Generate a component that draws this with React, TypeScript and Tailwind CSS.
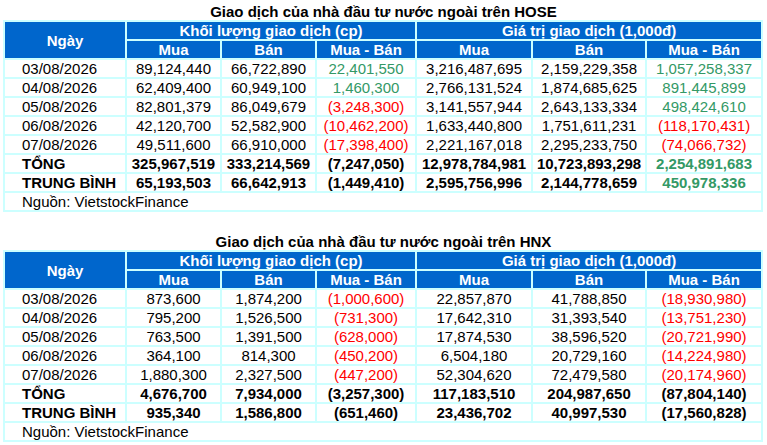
import { JSX } from 'react';

type Cell = { v: string; c?: 'g' | 'r' };
type Row = { d: string; cells: Cell[]; bold?: boolean };

const hose: Row[] = [
  { d: '03/08/2026', cells: [{ v: '89,124,440' }, { v: '66,722,890' }, { v: '22,401,550', c: 'g' }, { v: '3,216,487,695' }, { v: '2,159,229,358' }, { v: '1,057,258,337', c: 'g' }] },
  { d: '04/08/2026', cells: [{ v: '62,409,400' }, { v: '60,949,100' }, { v: '1,460,300', c: 'g' }, { v: '2,766,131,524' }, { v: '1,874,685,625' }, { v: '891,445,899', c: 'g' }] },
  { d: '05/08/2026', cells: [{ v: '82,801,379' }, { v: '86,049,679' }, { v: '(3,248,300)', c: 'r' }, { v: '3,141,557,944' }, { v: '2,643,133,334' }, { v: '498,424,610', c: 'g' }] },
  { d: '06/08/2026', cells: [{ v: '42,120,700' }, { v: '52,582,900' }, { v: '(10,462,200)', c: 'r' }, { v: '1,633,440,800' }, { v: '1,751,611,231' }, { v: '(118,170,431)', c: 'r' }] },
  { d: '07/08/2026', cells: [{ v: '49,511,600' }, { v: '66,910,000' }, { v: '(17,398,400)', c: 'r' }, { v: '2,221,167,018' }, { v: '2,295,233,750' }, { v: '(74,066,732)', c: 'r' }] },
  { d: 'TỔNG', bold: true, cells: [{ v: '325,967,519' }, { v: '333,214,569' }, { v: '(7,247,050)' }, { v: '12,978,784,981' }, { v: '10,723,893,298' }, { v: '2,254,891,683', c: 'g' }] },
  { d: 'TRUNG BÌNH', bold: true, cells: [{ v: '65,193,503' }, { v: '66,642,913' }, { v: '(1,449,410)' }, { v: '2,595,756,996' }, { v: '2,144,778,659' }, { v: '450,978,336', c: 'g' }] },
];

const hnx: Row[] = [
  { d: '03/08/2026', cells: [{ v: '873,600' }, { v: '1,874,200' }, { v: '(1,000,600)', c: 'r' }, { v: '22,857,870' }, { v: '41,788,850' }, { v: '(18,930,980)', c: 'r' }] },
  { d: '04/08/2026', cells: [{ v: '795,200' }, { v: '1,526,500' }, { v: '(731,300)', c: 'r' }, { v: '17,642,310' }, { v: '31,393,540' }, { v: '(13,751,230)', c: 'r' }] },
  { d: '05/08/2026', cells: [{ v: '763,500' }, { v: '1,391,500' }, { v: '(628,000)', c: 'r' }, { v: '17,874,530' }, { v: '38,596,520' }, { v: '(20,721,990)', c: 'r' }] },
  { d: '06/08/2026', cells: [{ v: '364,100' }, { v: '814,300' }, { v: '(450,200)', c: 'r' }, { v: '6,504,180' }, { v: '20,729,160' }, { v: '(14,224,980)', c: 'r' }] },
  { d: '07/08/2026', cells: [{ v: '1,880,300' }, { v: '2,327,500' }, { v: '(447,200)', c: 'r' }, { v: '52,304,620' }, { v: '72,479,580' }, { v: '(20,174,960)', c: 'r' }] },
  { d: 'TỔNG', bold: true, cells: [{ v: '4,676,700' }, { v: '7,934,000' }, { v: '(3,257,300)' }, { v: '117,183,510' }, { v: '204,987,650' }, { v: '(87,804,140)' }] },
  { d: 'TRUNG BÌNH', bold: true, cells: [{ v: '935,340' }, { v: '1,586,800' }, { v: '(651,460)' }, { v: '23,436,702' }, { v: '40,997,530' }, { v: '(17,560,828)' }] },
];

function ForeignTable({ title, rows }: { title: string; rows: Row[] }): JSX.Element {
  const head = 'bg-[#0066cc] text-white font-bold text-center h-[17px] p-0 leading-[17px]';
  return (
    <div>
      {/* tiêu đề bảng */}
      <div className="h-[20px] text-center text-[15px] font-bold leading-[24px] text-black whitespace-nowrap">{title}</div>
      <table className="ml-[3px] w-[760px] table-fixed border-separate border-spacing-[2px] bg-[#ccffff] text-[15px] leading-[17px]">
        <colgroup>
          <col className="w-[120px]" />
          <col className="w-[93px]" />
          <col className="w-[93px]" />
          <col className="w-[98px]" />
          <col className="w-[114px]" />
          <col className="w-[112px]" />
          <col className="w-[114px]" />
        </colgroup>
        <thead>
          <tr>
            <th rowSpan={2} className={head}>Ngày</th>
            <th colSpan={3} className={head}>Khối lượng giao dịch (cp)</th>
            <th colSpan={3} className={head}>Giá trị giao dịch (1,000đ)</th>
          </tr>
          <tr>
            <th className={head}>Mua</th>
            <th className={head}>Bán</th>
            <th className={head}>Mua - Bán</th>
            <th className={head}>Mua</th>
            <th className={head}>Bán</th>
            <th className={head}>Mua - Bán</th>
          </tr>
        </thead>
        <tbody>
          {rows.map((r) => (
            <tr key={r.d} className={r.bold ? 'font-bold' : ''}>
              <td className="h-[17px] bg-white p-0 pl-[17px] text-left text-black whitespace-nowrap">{r.d}</td>
              {r.cells.map((c, i) => (
                <td
                  key={i}
                  className={
                    'h-[17px] bg-white p-0 text-center whitespace-nowrap ' +
                    (c.c === 'g' ? 'text-[#339966]' : c.c === 'r' ? 'text-[#ff0000]' : 'text-black')
                  }
                >
                  {c.v}
                </td>
              ))}
            </tr>
          ))}
          <tr>
            <td colSpan={7} className="h-[17px] bg-white p-0 pl-[17px] text-left text-black">
              Nguồn: VietstockFinance
            </td>
          </tr>
        </tbody>
      </table>
    </div>
  );
}

export default function App(): JSX.Element {
  return (
    <div className="w-[767px] h-[445px] bg-white font-['Liberation_Sans',Arial,sans-serif] overflow-hidden">
      <ForeignTable title="Giao dịch của nhà đầu tư nước ngoài trên HOSE" rows={hose} />
      <div className="h-[18px]" />
      <ForeignTable title="Giao dịch của nhà đầu tư nước ngoài trên HNX" rows={hnx} />
    </div>
  );
}
